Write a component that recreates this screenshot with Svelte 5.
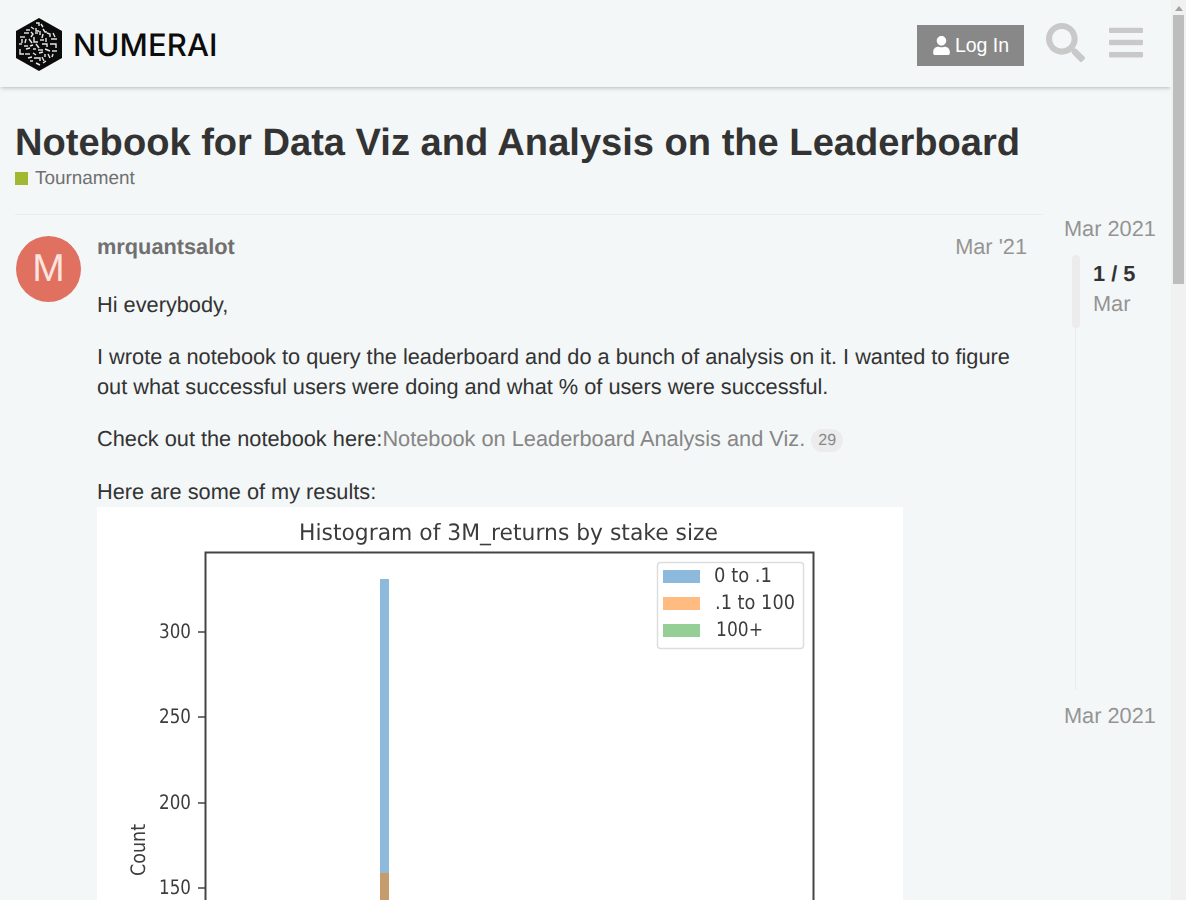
<script>
  // little white strokes inside the hexagon mark, in logo coordinates
  const maze = [
    'M36 23h3v3', 'M41 24l2 3', 'M31 27l3 2', 'M36 28v3h3', 'M43 29l2 3h2', 'M26 30h4',
    'M24 33h5', 'M31 32l2 2-2 3', 'M35 33h3', 'M40 31v4', 'M43 34l-1 4', 'M47 33l3 1v3', 'M53 33l2 4',
    'M20 37h5', 'M22 39v4', 'M26 39l-1 4', 'M29 39l3 4', 'M34 37v5h4', 'M40 40h4', 'M46 38v4', 'M51 39h6',
    'M19 44h3', 'M24 46h4', 'M30 46l3-1', 'M36 44l3 4', 'M42 44h5v3', 'M50 44h6v4',
    'M20 49v5h4', 'M26 49l4-1', 'M33 49h3', 'M38 50h5', 'M45 49l5 2', 'M52 51h5',
    'M25 54h5', 'M33 53l3 2', 'M39 53l4-1', 'M45 54v3', 'M48 54l2 4', 'M53 54l-1 3',
    'M28 58l4-1', 'M34 58h6v3', 'M42 57l2 4', 'M30 61h3', 'M36 63l4 2', 'M43 63l3-2'
  ];
</script>

<div class="page">
  <header class="site-header">
    <a class="logo" href="#top">
      <svg class="mark" viewBox="15 17 48 55" width="48" height="55">
        <polygon points="39,18 62,31 62,58 39,71 16,58 16,31" fill="#0b0b0b" />
        {#each maze as d}
          <path {d} fill="none" stroke="#e8e8e8" stroke-width="1.400" />
        {/each}
      </svg>
      <span class="wordmark">NUMERAI</span>
    </a>
    <div class="header-actions">
      <button class="login">
        <svg viewBox="0 0 448 512" width="17" height="19"><path fill="currentColor" d="M224 256c70.7 0 128-57.3 128-128S294.7 0 224 0 96 57.3 96 128s57.3 128 128 128zm89.6 32h-16.7c-22.2 10.2-46.9 16-72.9 16s-50.6-5.8-72.9-16h-16.7C60.2 288 0 348.2 0 422.4V464c0 26.5 21.5 48 48 48h352c26.5 0 48-21.5 48-48v-41.6c0-74.2-60.2-134.4-134.4-134.4z"/></svg>
        Log In
      </button>
      <svg class="search" viewBox="0 0 512 512" width="39" height="39"><path fill="currentColor" d="M505 442.7L405.3 343c-4.5-4.5-10.6-7-17-7H372c27.6-35.3 44-79.7 44-128C416 93.1 322.9 0 208 0S0 93.1 0 208s93.1 208 208 208c48.3 0 92.7-16.4 128-44v16.3c0 6.4 2.5 12.5 7 17l99.7 99.7c9.4 9.4 24.6 9.4 33.9 0l28.3-28.3c9.4-9.4 9.4-24.6.1-34zM208 336c-70.7 0-128-57.2-128-128 0-70.7 57.2-128 128-128 70.7 0 128 57.2 128 128 0 70.7-57.2 128-128 128z"/></svg>
      <svg class="bars" viewBox="0 0 448 512" width="34" height="39"><path fill="currentColor" d="M16 132h416c8.837 0 16-7.163 16-16V76c0-8.837-7.163-16-16-16H16C7.163 60 0 67.163 0 76v40c0 8.837 7.163 16 16 16zm0 160h416c8.837 0 16-7.163 16-16v-40c0-8.837-7.163-16-16-16H16c-8.837 0-16 7.163-16 16v40c0 8.837 7.163 16 16 16zm0 160h416c8.837 0 16-7.163 16-16v-40c0-8.837-7.163-16-16-16H16c-8.837 0-16 7.163-16 16v40c0 8.837 7.163 16 16 16z"/></svg>
    </div>
  </header>

  <main class="wrap">
    <h1>Notebook for Data Viz and Analysis on the Leaderboard</h1>
    <div class="category"><span class="badge"></span>Tournament</div>

    <div class="topic">
      <article class="post">
        <div class="avatar">M</div>
        <div class="post-body">
          <div class="post-meta">
            <span class="username">mrquantsalot</span>
            <span class="post-date">Mar '21</span>
          </div>
          <p>Hi everybody,</p>
          <p>I wrote a notebook to query the leaderboard and do a bunch of analysis on it. I wanted to figure out what successful users were doing and what % of users were successful.</p>
          <p>Check out the notebook here:<a href="#nb">Notebook on Leaderboard Analysis and Viz.</a> <span class="clicks">29</span></p>
          <p class="tight">Here are some of my results:</p>
          <svg class="chart" viewBox="0 0 806 560" width="806" height="560">
            <rect width="806" height="560" fill="#fff" />
            <g class="soft">
              <text x="202" y="33" font-size="22.5" textLength="419" lengthAdjust="spacingAndGlyphs">Histogram of 3M_returns by stake size</text>
              <rect x="108.500" y="45.500" width="608" height="520" fill="none" stroke="#444" stroke-width="2" />
              <rect x="283" y="72" width="9" height="294" fill="#8cb9dc" />
              <rect x="283" y="366" width="9" height="200" fill="#c69c6f" />
              <rect x="560.500" y="55.500" width="146" height="86" rx="3" fill="#fff" stroke="#ddd" stroke-width="1.500" />
              <rect x="566" y="63" width="37" height="13" fill="#8cb9dc" />
              <rect x="566" y="90" width="37" height="13" fill="#ffbb80" />
              <rect x="566" y="117" width="37" height="13" fill="#95cf95" />
              <text x="617" y="75" font-size="20" textLength="58" lengthAdjust="spacingAndGlyphs">0 to .1</text>
              <text x="618" y="102" font-size="20" textLength="80" lengthAdjust="spacingAndGlyphs">.1 to 100</text>
              <text x="619" y="129" font-size="20" textLength="47" lengthAdjust="spacingAndGlyphs">100+</text>
              <g font-size="20">
                <text x="62" y="131" textLength="32" lengthAdjust="spacingAndGlyphs">300</text>
                <text x="62" y="216" textLength="32" lengthAdjust="spacingAndGlyphs">250</text>
                <text x="62" y="302" textLength="32" lengthAdjust="spacingAndGlyphs">200</text>
                <text x="62" y="387" textLength="32" lengthAdjust="spacingAndGlyphs">150</text>
              </g>
              <g stroke="#444" stroke-width="1.500">
                <path d="M101 125h7M101 210h7M101 296h7M101 381h7" />
              </g>
              <text transform="translate(48 369) rotate(-90)" font-size="20" textLength="52" lengthAdjust="spacingAndGlyphs">Count</text>
            </g>
          </svg>
        </div>
      </article>

      <aside class="timeline">
        <div class="timeline-date">Mar 2021</div>
        <div class="scroller">
          <div class="handle"></div>
          <div class="progress">
            <strong>1 / 5</strong>
            <span>Mar</span>
          </div>
        </div>
        <div class="rail"></div>
        <div class="timeline-date end">Mar 2021</div>
      </aside>
    </div>
  </main>

  <div class="scrollbar">
    <span class="arrow"></span>
    <span class="thumb"></span>
  </div>
</div>

<style>
  :global(body) {
    margin: 0;
    background: #f4f7f8;
    overflow: hidden;
  }

  .page {
    position: relative;
    height: 900px;
    width: 1186px;
    overflow: hidden;
    font-family: "Liberation Sans", Arial, sans-serif;
    color: #333;
    text-rendering: geometricPrecision;
  }

  .site-header {
    width: 1171px;
    height: 87px;
    box-sizing: border-box;
    padding: 0 28px 0 16px;
    display: flex;
    align-items: center;
    justify-content: space-between;
    box-shadow: 0 2px 4px -1px rgba(0, 0, 0, 0.25);
  }

  .logo {
    display: flex;
    align-items: center;
    gap: 10px;
    text-decoration: none;
    margin: 2px 0 0 -1px;
  }

  .mark {
    display: block;
  }

  .wordmark {
    font-family: Inter, sans-serif;
    font-weight: 500;
    font-size: 31px;
    letter-spacing: 0.1px;
    color: #0c0c0c;
    line-height: 1;
    margin-top: 2px;
  }

  .header-actions {
    display: flex;
    align-items: center;
    margin-top: -2px;
  }

  .login {
    width: 107px;
    height: 41px;
    margin-top: 6px;
    border: 0;
    background: #888;
    color: #fff;
    font: 19.5px "Liberation Sans", Arial, sans-serif;
    display: flex;
    align-items: center;
    justify-content: center;
    gap: 5px;
    padding: 0 0 0 1px;
  }

  .search {
    color: #c9c9c9;
    margin-left: 22px;
    display: block;
  }

  .bars {
    color: #c9c9c9;
    margin-left: 24px;
    display: block;
  }

  .wrap {
    width: 1171px;
    box-sizing: border-box;
    padding: 36px 0 0 15px;
  }

  h1 {
    margin: 0;
    font-size: 38.08px;
    line-height: 40px;
    font-weight: 700;
    color: #333;
  }

  .category {
    display: flex;
    align-items: center;
    gap: 7px;
    margin-top: 5px;
    font-size: 18.9px;
    line-height: 22px;
    color: #707070;
  }

  .badge {
    width: 13px;
    height: 13px;
    margin-top: -1px;
    background: #a0b832;
  }

  .topic {
    display: flex;
    margin-top: 24px;
  }

  .post {
    flex: none;
    width: 1028px;
    box-sizing: border-box;
    border-top: 1px solid #e9ebec;
    padding: 21px 16px 0 1px;
    display: flex;
    gap: 16px;
  }

  .avatar {
    width: 65px;
    height: 66px;
    flex: none;
    border-radius: 50%;
    background: #e0705f;
    color: #fbe3df;
    font-size: 39px;
    line-height: 65px;
    text-align: center;
  }

  .post-body {
    flex: 1;
    min-width: 0;
    font-size: 21.76px;
  }

  .post-meta {
    display: flex;
    justify-content: space-between;
    align-items: baseline;
    line-height: 22px;
    margin-bottom: 31.5px;
  }

  .username {
    font-weight: 700;
    color: #707070;
  }

  .post-date {
    color: #949494;
  }

  p {
    margin: 0 0 1em;
    line-height: 1.4;
  }

  p.tight {
    margin: 0;
  }

  a {
    color: #868686;
    text-decoration: none;
  }

  .clicks {
    display: inline-block;
    padding: 0 7px;
    border-radius: 12px;
    background: #ececec;
    color: #888;
    font-size: 16px;
    line-height: 23px;
    vertical-align: 1px;
  }

  .chart {
    display: block;
    font-family: "DejaVu Sans", sans-serif;
  }

  .chart text {
    fill: #3c3c3c;
  }

  .soft {
    filter: blur(0.55px);
  }

  .timeline {
    flex: none;
    width: 107px;
    margin-left: 21px;
    font-size: 21.76px;
    color: #949494;
  }

  .timeline-date {
    line-height: 30px;
  }

  .scroller {
    display: flex;
    margin: 11px 0 0 8px;
    gap: 13px;
  }

  .handle {
    width: 8px;
    height: 73px;
    border-radius: 4px;
    background: #ececec;
  }

  .progress {
    display: flex;
    flex-direction: column;
    line-height: 30px;
    padding-top: 4px;
    height: 69px;
  }

  .progress strong {
    color: #333;
  }

  .rail {
    width: 1px;
    height: 362px;
    margin-left: 11px;
    background: #e9ebec;
  }

  .end {
    margin-top: 11px;
  }

  .scrollbar {
    position: absolute;
    top: 0;
    right: 0;
    width: 15px;
    height: 900px;
    background: #f1f1f1;
  }

  .arrow {
    position: absolute;
    top: 6px;
    left: 4px;
    border: 4px solid transparent;
    border-top: 0;
    border-bottom: 5px solid #a3a3a3;
  }

  .thumb {
    position: absolute;
    top: 15px;
    left: 2px;
    width: 11px;
    height: 269px;
    background: #bdbdbd;
  }
</style>
